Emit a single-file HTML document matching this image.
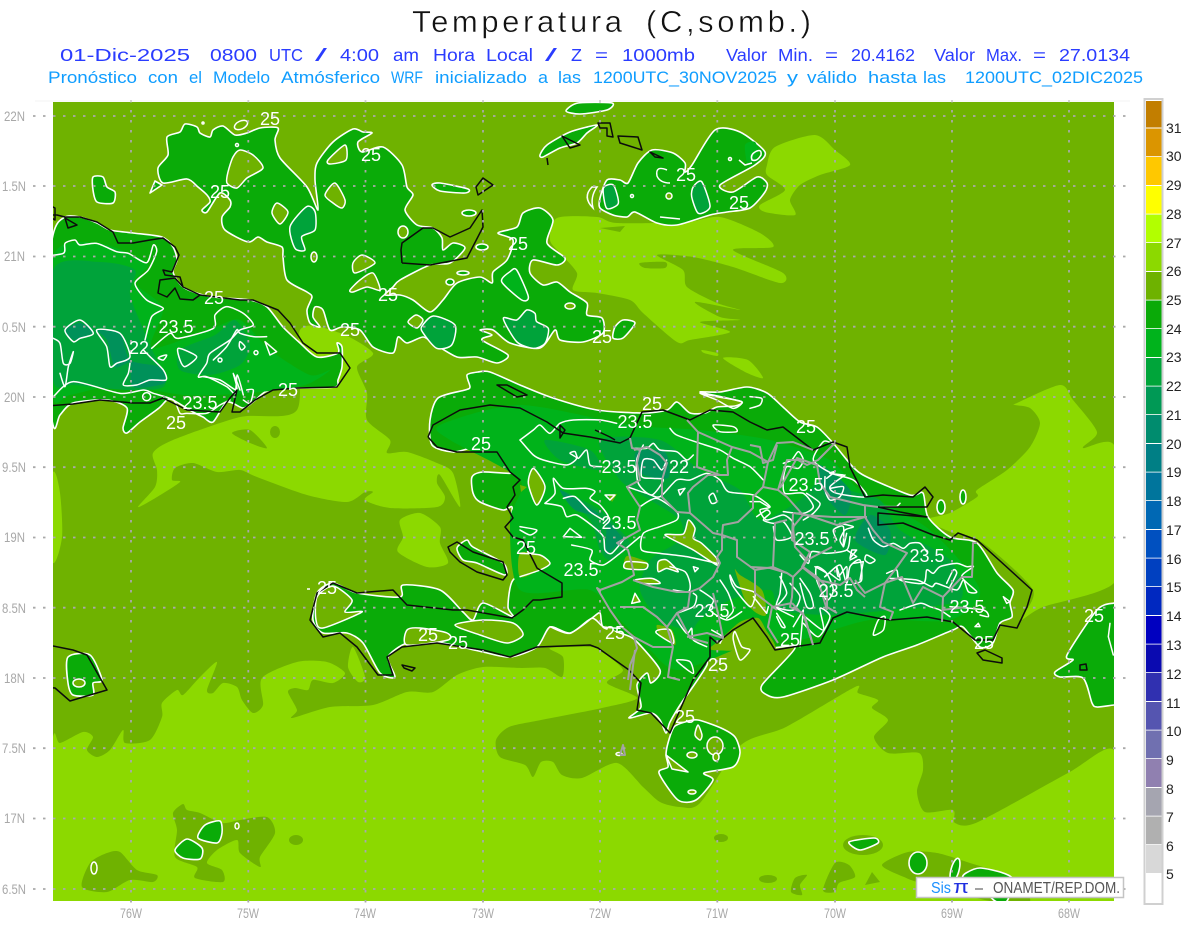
<!DOCTYPE html>
<html lang="es"><head><meta charset="utf-8"><title>Temperatura</title>
<style>
html,body{margin:0;padding:0;background:#fff;width:1200px;height:927px;overflow:hidden}
svg{display:block;font-family:"Liberation Sans",sans-serif}
.l polygon,.l path{fill:#8cd900;stroke:none}
.o polygon,.o ellipse,.o path{fill:#6fb200;stroke:none}
.g polygon,.g ellipse,.g path{fill:#0aab08;stroke:#fff;stroke-width:1.6;stroke-linejoin:round}
.h polygon,.h ellipse,.h circle,.h path{fill:#6fb200;stroke:#fff;stroke-width:1.5;stroke-linejoin:round}
.c polyline,.c polygon,.c path,.c circle{fill:none;stroke:#fff;stroke-width:4.5;stroke-linejoin:round;stroke-linecap:round}
.k polyline,.k polygon{fill:none;stroke:#0c0c0c;stroke-width:1.5;stroke-linejoin:round}
.b polyline{fill:none;stroke:#a2a2a2;stroke-width:2;stroke-linejoin:round}
.t text{fill:#fff;font-size:18px;text-anchor:middle}
.y text{fill:#a8a8a8;font-size:14px}
.x text{fill:#a8a8a8;font-size:14px}
.n text{fill:#222;font-size:14px}
.a text{font-size:17.500px;fill:#2a3cff}
.d text{font-size:17px;fill:#0f9dff}
</style></head><body>
<svg width="1200" height="927" viewBox="0 0 1200 927" xmlns="http://www.w3.org/2000/svg">
<rect width="1200" height="927" fill="#fff"/>
<g font-size="31" fill="#111" stroke="#fff" stroke-width=".45">
<text x="412" y="32" textLength="210" lengthAdjust="spacing">Temperatura</text>
<text x="646" y="32" textLength="165" lengthAdjust="spacing">(C,somb.)</text>
</g>
<g class="a">
<text x="60" y="61" textLength="130" lengthAdjust="spacingAndGlyphs">01-Dic-2025</text>
<text x="210" y="61" textLength="47" lengthAdjust="spacingAndGlyphs">0800</text>
<text x="269" y="61" textLength="34" lengthAdjust="spacingAndGlyphs">UTC</text>
<text x="315" y="61" textLength="12" lengthAdjust="spacingAndGlyphs">/</text>
<text x="340" y="61" textLength="39" lengthAdjust="spacingAndGlyphs">4:00</text>
<text x="393" y="61" textLength="26" lengthAdjust="spacingAndGlyphs">am</text>
<text x="433" y="61" textLength="42" lengthAdjust="spacingAndGlyphs">Hora</text>
<text x="486" y="61" textLength="47" lengthAdjust="spacingAndGlyphs">Local</text>
<text x="545" y="61" textLength="12" lengthAdjust="spacingAndGlyphs">/</text>
<text x="571" y="61" textLength="11" lengthAdjust="spacingAndGlyphs">Z</text>
<text x="595" y="61" textLength="13" lengthAdjust="spacingAndGlyphs">=</text>
<text x="622" y="61" textLength="73" lengthAdjust="spacingAndGlyphs">1000mb</text>
<text x="726" y="61" textLength="41" lengthAdjust="spacingAndGlyphs">Valor</text>
<text x="778" y="61" textLength="35" lengthAdjust="spacingAndGlyphs">Min.</text>
<text x="825" y="61" textLength="13" lengthAdjust="spacingAndGlyphs">=</text>
<text x="851" y="61" textLength="64" lengthAdjust="spacingAndGlyphs">20.4162</text>
<text x="934" y="61" textLength="41" lengthAdjust="spacingAndGlyphs">Valor</text>
<text x="986" y="61" textLength="36" lengthAdjust="spacingAndGlyphs">Max.</text>
<text x="1033" y="61" textLength="13" lengthAdjust="spacingAndGlyphs">=</text>
<text x="1059" y="61" textLength="71" lengthAdjust="spacingAndGlyphs">27.0134</text>
</g>
<g class="d">
<text x="48" y="83" textLength="89" lengthAdjust="spacingAndGlyphs">Pronóstico</text>
<text x="148" y="83" textLength="30" lengthAdjust="spacingAndGlyphs">con</text>
<text x="189" y="83" textLength="13" lengthAdjust="spacingAndGlyphs">el</text>
<text x="213" y="83" textLength="57" lengthAdjust="spacingAndGlyphs">Modelo</text>
<text x="281" y="83" textLength="99" lengthAdjust="spacingAndGlyphs">Atmósferico</text>
<text x="391" y="83" textLength="32" lengthAdjust="spacingAndGlyphs">WRF</text>
<text x="435" y="83" textLength="92" lengthAdjust="spacingAndGlyphs">inicializado</text>
<text x="538" y="83" textLength="10" lengthAdjust="spacingAndGlyphs">a</text>
<text x="558" y="83" textLength="23" lengthAdjust="spacingAndGlyphs">las</text>
<text x="593" y="83" textLength="184" lengthAdjust="spacingAndGlyphs">1200UTC_30NOV2025</text>
<text x="787" y="83" textLength="11" lengthAdjust="spacingAndGlyphs">y</text>
<text x="807" y="83" textLength="50" lengthAdjust="spacingAndGlyphs">válido</text>
<text x="868" y="83" textLength="49" lengthAdjust="spacingAndGlyphs">hasta</text>
<text x="923" y="83" textLength="23" lengthAdjust="spacingAndGlyphs">las</text>
<text x="965" y="83" textLength="178" lengthAdjust="spacingAndGlyphs">1200UTC_02DIC2025</text>
</g>

<rect x="53" y="102" width="1061" height="799" fill="#6fb200"/>
<svg x="53" y="102" width="1061" height="799" viewBox="53 102 1061 799" overflow="hidden">
<g class="l s">
<polygon points="53,737 60,743 83,732 93,737 87,750 97,757 110,750 123,730 125,743 150,740 162,717 162,703 177,690 183,695 200,677 217,662 207,690 213,693 223,683 237,687 242,700 253,713 263,705 262,678 297,662 327,662 345,673 333,683 313,680 308,690 295,688 288,692 297,710 292,718 330,707 373,705 407,692 433,692 457,675 483,667 521,668 545,668 562,677 563,657 550,648 590,647 600,650 623,670 607,683 637,698 602,708 541,720 509,727 496,740 500,757 525,765 533,777 541,762 553,762 562,775 582,778 617,763 643,787 660,802 680,807 700,803 741,745 786,727 855,687 858,693 878,700 872,708 888,720 874,737 888,753 919,753 923,770 917,792 925,812 953,810 955,823 978,822 1068,773 1114,750 1125,830 1114,915 590,915 53,915 40,830"/>
<polygon points="353,647 365,677 358,682 348,667"/>
<polygon points="1017,403 1060,385 1073,400 1097,432 1083,448 1114,445 1125,520 1114,583 1043,607 1020,620 1033,590 983,543 953,533 927,520 950,513 977,497 977,490 1007,470 1030,447 1040,423 1030,408 1015,405"/>
<polygon points="557,218 597,217 617,223 687,222 720,217 760,233 773,247 733,250 783,273 780,283 733,267 693,257 657,255 683,270 687,287 717,303 740,310 695,302 720,317 740,320 700,322 730,332 690,340 677,342 643,313 630,300 597,293 573,290 577,273 560,253 550,240"/>
<polygon points="767,165 775,147 815,135 835,150 850,165 820,175 800,185 790,200 795,215 765,212 760,205 785,190 767,175"/>
<polygon points="153,453 173,440 240,417 297,410 300,330 340,333 373,353 357,367 367,393 367,420 390,440 387,453 407,452 437,463 453,473 460,507 440,475 437,483 445,497 437,507 390,508 365,500 373,492 365,492 347,502 307,495 257,477 240,470 217,472 193,463 175,468 172,480 180,482 157,497 138,507 155,487 157,470"/>
<polygon points="400,520 420,513 440,527 440,543 448,563 427,567 398,552 403,537"/>
<polygon points="53,472 60,493 62,537 53,563 40,520"/>
<polygon points="723,358 748,360 763,378 745,372"/>
<polygon points="702,350 717,353 717,356 704,353"/>
</g>
<g class="o s">
<polygon points="183,804 173,813 177,830 175,857 197,867 195,878 223,882 222,870 207,863 217,850 237,840 240,853 260,867 260,857 275,833 267,817 240,820 222,823 200,813 187,810"/>
<polygon points="90,863 82,887 107,892 130,880 153,882 157,875 137,870 120,852 107,853"/>
<ellipse cx="296" cy="840" rx="7" ry="5"/>
<ellipse cx="721" cy="838" rx="7" ry="4"/>
<ellipse cx="768" cy="879" rx="9" ry="4"/>
<polygon points="791,892 795,878 807,875 800,885 802,895"/>
<polygon points="823,890 835,863 849,865 855,877 839,883 835,892"/>
<polygon points="865,885 872,872 880,882"/>
<polygon points="882,865 908,852 937,853 970,863 1010,877 1030,901 990,901 921,883 904,877"/>
<ellipse cx="863" cy="845" rx="20" ry="10"/>
<polygon points="232,433 250,430 267,448 250,443"/>
<ellipse cx="275" cy="432" rx="5" ry="6"/>
<polygon points="640,263 665,262 665,268 645,268"/>
<polygon points="600,228 625,226 620,232"/>
</g>
<g class="g s">
<polygon points="167,137 180,132 185,124 197,127 200,133 210,137 213,130 223,126 235,135 247,133 260,128 278,128 275,140 280,158 307,187 318,210 315,180 317,163 333,142 353,129 363,132 372,133 358,142 362,152 383,147 402,165 407,187 413,195 405,210 417,225 433,228 442,238 443,250 453,243 465,248 450,263 430,265 400,280 393,287 385,295 400,295 413,300 430,312 443,300 457,283 480,277 492,283 493,272 507,260 513,240 498,233 517,227 523,213 540,208 553,220 547,243 565,258 557,265 533,260 530,273 543,285 557,282 570,292 587,303 587,315 602,318 603,333 583,342 560,340 555,330 540,348 510,343 493,330 480,330 492,335 482,340 508,355 497,363 477,357 457,357 433,343 423,337 407,343 398,337 393,353 373,347 360,330 342,327 330,330 323,310 315,307 313,317 320,327 310,323 307,310 312,297 307,292 287,280 283,257 282,247 267,242 258,237 248,242 225,230 222,217 230,207 230,200 220,193 207,212 202,210 210,202 207,195 198,187 187,179 163,183 158,168 168,155"/>
<polygon points="93,177 103,177 107,187 115,192 113,203 97,202 93,190"/>
<polygon points="155,181 162,185 150,193"/>
<polygon points="53,235 65,217 80,217 97,223 110,230 133,233 162,237 173,247 177,260 173,272 183,287 203,295 223,298 250,300 267,307 283,327 300,343 317,357 338,353 337,343 342,347 342,367 338,380 335,387 297,388 280,387 265,392 253,402 243,408 227,402 213,422 203,417 193,412 173,400 167,400 159,408 140,422 127,433 123,428 127,408 107,400 73,403 60,415 53,425 40,330"/>
<polygon points="540,155 547,145 570,132 597,125 587,133 577,143 560,148 543,157"/>
<polygon points="566,111 578,103 612,103 607,110 580,114"/>
<polygon points="600,198 607,180 620,180 628,183 638,163 652,150 673,153 685,163 685,172 692,165 715,130 740,132 765,152 755,165 720,185 733,192 757,177 767,183 765,192 750,208 727,212 710,215 677,225 657,223 635,212 627,217 613,215 600,208"/>
<polygon points="432,185 440,183 468,189 465,193 440,191"/>
<polygon points="615,327 623,320 635,323 623,338 613,338"/>
<polygon points="467,375 478,372 490,372 520,385 553,398 597,410 643,413 667,410 677,402 690,413 705,413 717,407 735,406 742,402 722,397 700,392 720,392 747,387 767,393 783,407 800,422 817,427 833,443 853,467 867,477 910,495 923,493 928,517 950,537 977,543 997,573 1013,590 1010,603 1012,617 1000,623 993,643 980,647 963,627 953,630 917,645 883,657 833,680 783,697 767,695 762,685 795,648 770,648 711,648 707,665 692,688 682,702 670,722 666,733 660,720 651,713 629,718 641,707 637,685 647,673 651,683 660,670 635,640 620,633 603,627 600,613 592,618 570,633 550,627 537,647 510,657 483,652 437,642 407,643 388,657 395,677 380,673 363,643 347,633 323,633 313,620 317,593 333,583 357,593 400,597 403,585 440,590 463,612 473,620 483,603 513,617 508,607 513,580 537,570 530,555 512,525 512,507 503,510 480,502 473,493 472,477 483,472 512,473 507,462 495,452 473,448 453,452 432,445 430,420 438,398 465,390 470,387"/>
<polygon points="457,548 467,540 473,547 503,563 505,575 477,563 463,560"/>
<polygon points="698,720 721,728 735,737 740,753 733,767 704,773 713,780 696,800 678,800 659,773 668,767 666,755 668,743 674,727 685,722"/>
<polygon points="68,657 90,655 102,680 93,683 93,695 73,695 68,683"/>
<polygon points="220,821 222,833 217,843 198,838 205,825"/>
<polygon points="187,839 202,848 200,859 183,858 175,850"/>
<polygon points="1125,603 1114,603 1097,610 1067,655 1073,660 1055,672 1060,677 1083,678 1092,703 1097,707 1114,705 1125,705"/>
<ellipse cx="918" cy="863" rx="9" ry="11"/>
<ellipse cx="955" cy="870" rx="4" ry="12" transform="rotate(15 955 870)" />
<polygon points="966,873 980,868 1003,873 1013,880 1007,901 995,901 977,883 963,878"/>
<polygon points="849,842 874,838 878,843 860,850"/>
<ellipse cx="463" cy="273" rx="6" ry="2"/>
<ellipse cx="450" cy="282" rx="4" ry="3"/>
<ellipse cx="482" cy="247" rx="6" ry="3"/>
<ellipse cx="469" cy="213" rx="7" ry="3"/>
<ellipse cx="963" cy="497" rx="3" ry="7"/>
<ellipse cx="941" cy="507" rx="4" ry="7"/>
</g>
<!-- interior shades -->
<g fill="#00b31a" class="s">
<polygon points="440,425 520,405 630,425 700,430 770,440 830,460 860,490 930,530 980,590 950,620 870,620 800,640 760,640 680,670 650,650 620,620 590,590 520,590 510,520 520,480 450,440"/>
<polygon points="53,257 97,243 147,263 135,283 163,308 152,348 213,328 240,320 270,350 310,375 330,370 305,385 250,393 185,395 120,385 70,395 53,395"/>
<polygon points="510,272 517,270 528,297 522,300 502,282"/>
<polygon points="745,145 755,142 758,155 748,165"/>
</g>
<g fill="#00a33a" class="s">
<polygon points="53,270 100,262 135,270 130,295 150,345 165,385 130,390 75,385 53,380"/>
<polygon points="180,350 215,335 235,320 250,345 240,365 210,375 180,370"/>
<polygon points="600,440 660,440 700,470 740,490 760,520 800,500 830,470 850,490 880,500 900,530 950,560 960,600 890,610 830,615 780,610 770,590 730,600 700,620 690,630 660,620 640,590 650,560 680,540 680,520 650,500 620,480"/>
<polygon points="545,440 590,450 600,470 560,460"/>
<polygon points="560,490 600,510 620,530 630,545 610,560 600,550 590,520"/>
<polygon points="503,318 517,320 527,310 535,313 537,322 548,328 545,343 533,348 517,342"/>
<polygon points="422,327 433,316 455,325 452,345 437,348 423,333"/>
<polygon points="603,188 613,185 618,203 607,208"/>
<polygon points="693,187 702,182 710,207 698,213 692,197"/>
<polygon points="307,207 315,212 315,230 302,237 305,250 295,248 290,227"/>
</g>
<g fill="#00915a" class="s">
<polygon points="97,330 120,333 130,360 160,367 165,383 133,387 130,363 115,367 107,340"/>
<polygon points="65,330 80,323 93,332 75,340"/>
<polygon points="636,452 665,452 668,478 640,473"/>
<polygon points="607,520 625,540 605,555"/>
<polygon points="820,465 850,490 845,515 825,495"/>
<polygon points="870,515 890,530 885,555 855,540"/>
<polygon points="560,490 585,505 600,515 575,510"/>
</g>
<g class="h s">
<polygon points="240,150 253,155 263,168 247,178 237,188 227,183 228,172 233,157"/>
<polygon points="345,145 346,160 330,164 328,160"/>
<polygon points="335,183 345,200 342,208 333,203 325,195"/>
<polygon points="277,203 288,212 280,224 272,213"/>
<ellipse cx="314" cy="257" rx="3" ry="5"/>
<polygon points="362,255 375,263 355,273 353,263"/>
<polygon points="350,290 360,280 373,273 380,290 367,287 353,292"/>
<ellipse cx="403" cy="232" rx="5" ry="6"/>
<ellipse cx="241" cy="125" rx="7" ry="4" transform="rotate(-25 241 125)"/>
<ellipse cx="570" cy="306" rx="5" ry="3"/>
<polygon points="408,322 416,315 423,320 417,328"/>
<ellipse cx="79" cy="683" rx="6" ry="4"/>
<ellipse cx="94" cy="868" rx="3" ry="6"/>
<ellipse cx="237" cy="826" rx="2" ry="3"/>
<circle cx="669" cy="196" r="3"/>
<polygon points="407,630 420,628 447,633 448,640 407,645"/>
<polygon points="317,597 333,586 352,600 345,612 362,612 323,628 316,620"/>
<polygon points="455,625 483,620 513,623 523,635 507,643 480,635"/>
<polygon points="666,755 688,772 672,769"/>
<ellipse cx="715" cy="746" rx="8" ry="9"/>
<polygon points="698,725 702,735 700,740 695,735"/>
<ellipse cx="692" cy="755" rx="5" ry="3"/>
<ellipse cx="716" cy="757" rx="3" ry="4"/>
<ellipse cx="692" cy="792" rx="4" ry="2"/>
</g>
<!-- olive holes in Hispaniola -->
<g fill="#72b400" class="s">
<polygon points="665,535 683,534 688,520 695,529 693,538 702,543 717,558 717,565 693,550"/>
<polygon points="658,562 667,560 678,571 667,568 658,572"/>
<polygon points="627,556 647,562 645,568 625,568"/>
<polygon points="635,580 652,578 660,583 643,584"/>
<polygon points="635,593 640,602 633,604"/>
<polygon points="735,570 740,575 762,590 766,615 755,612 745,600"/>
<polygon points="605,625 620,635 612,640"/>
<polygon points="657,625 672,630 675,645 660,635"/>
<polygon points="608,495 617,494 612,502"/>
<polygon points="533,468 545,487 537,505 528,483"/>
<polygon points="520,553 540,555 550,563 540,570 520,577"/>
<polygon points="520,485 527,487 521,492"/>
<polygon points="720,640 740,622 758,618 766,630 775,645 770,650 712,650"/>
</g>
<!-- inner contours -->
<g class="c s" transform="translate(40,100) scale(.33333)">
<polyline points="0,470 70,460 75,430 105,420 120,435 170,430 230,455 265,460 320,488 340,435 350,455 325,510 285,550 320,600 370,625 335,650 315,720"/>
<polyline points="335,745 390,700 415,715 520,685 525,645 560,620 610,640 640,675 600,690 570,720 510,760 500,790 475,830 500,830 560,860 585,880 592,825 610,885"/>
<polyline points="40,715 60,730 70,790 90,790 100,755 85,800 75,860 60,820"/>
<polygon points="75,690 120,660 160,700 120,715 100,725"/>
<polygon points="170,690 240,700 270,770 230,790 210,800 200,740"/>
<polyline points="40,890 100,845 240,880 310,870 340,880 400,900 420,940 440,940 500,940 540,915 570,900"/>
<polygon points="360,770 380,765 370,780 355,775"/>
<polygon points="415,745 470,770 435,800 420,780"/>
<polyline points="270,790 265,820 250,855 290,855 330,840 378,840 370,810 330,770 310,750"/>
<polyline points="490,830 540,840 590,870 580,820 600,870"/>
<polygon points="600,725 615,740 605,750 598,740"/>
<polygon points="675,725 710,755 690,765"/>
<polyline points="620,870 640,870 630,910 610,900"/>
<polyline points="520,780 560,740 590,690 600,700 640,710 680,710"/>
<circle cx="648" cy="758" r="6"/>
<circle cx="540" cy="780" r="6"/>
<circle cx="320" cy="890" r="12"/>
<polygon points="800,320 825,335 825,390 785,410 795,450 765,445 750,380"/>
</g>
<g class="c s" transform="translate(400,100) scale(.33333)">
<polygon points="310,655 350,660 380,630 405,640 410,665 445,685 435,730 400,745 350,725"/>
<polygon points="330,515 350,510 385,590 365,600 305,545"/>
<polygon points="65,680 100,648 165,675 155,735 110,745 70,700"/>
<polygon points="610,265 640,255 655,310 620,325"/>
<polygon points="880,260 905,245 930,320 895,340 875,290"/>
</g>
<g class="c s" transform="translate(520,380) scale(.33333)">
<polyline points="0,180 40,150 60,135 90,160 120,130 160,120 240,120 290,130"/>
<polyline points="0,180 40,225 70,240 140,255 170,235 150,220 165,215 175,235 200,210 210,255 245,260"/>
<polyline points="340,205 380,205 400,190 420,210 470,215 500,240 520,225"/>
<polyline points="450,145 470,165 540,190 600,210 640,235 690,260 730,300"/>
<polyline points="75,370 105,340 100,295 130,325 200,325 225,335 210,355 240,375 265,410 250,430"/>
<polyline points="75,370 125,380 140,410 170,405 220,440 250,470 255,510 275,520 310,480"/>
<polyline points="130,355 165,350 210,395 250,420"/>
<polygon points="40,265 75,320 50,375 25,310"/>
<polygon points="255,345 285,345 270,360"/>
<polygon points="130,470 150,445 185,472"/>
<polyline points="0,440 50,450 30,465 0,450"/>
<polyline points="0,520 60,525 90,550 60,570 0,590"/>
<polyline points="155,495 215,510 210,540 250,555 300,520 360,470"/>
<polyline points="370,195 350,240 355,310 395,345 430,300 400,295 365,290 370,240 400,240 425,270 440,240"/>
<polyline points="320,320 380,340 420,350 470,300 510,300 560,280 600,300 625,335 700,345 750,380 720,390 740,420 790,405 820,430 815,480"/>
<polyline points="360,380 410,355 470,395 470,420 420,440 370,460 365,510 420,520 500,530 590,550"/>
<polygon points="435,465 490,462 505,420 525,445 520,475 545,490 590,535 590,555 520,510"/>
<polygon points="415,545 440,540 475,575 440,565 415,575"/>
<polygon points="520,560 535,565 525,575"/>
<polygon points="580,340 590,365 575,370 567,350"/>
<polygon points="475,330 495,325 480,345"/>
<polygon points="630,585 650,620 700,635 705,650 690,680 640,620"/>
<polygon points="580,135 640,140 650,155 600,155"/>
<polygon points="320,545 380,550 375,568 315,565"/>
<polygon points="345,600 395,595 420,610 370,610"/>
<polygon points="345,640 360,665 335,670"/>
<polyline points="90,740 150,760 215,715 250,740 300,745"/>
<polygon points="415,750 450,750 460,790 410,760"/>
<polyline points="470,700 520,680 530,650 520,640"/>
<polyline points="470,720 500,760 515,745 520,780 560,800"/>
<polyline points="575,750 610,770 600,790"/>
<polygon points="645,755 665,800 690,810 660,840 640,780"/>
<polygon points="470,840 510,845 520,880 490,860"/>
<polyline points="790,250 815,240 835,215 850,240 835,265 800,260 790,300 795,340 850,340 880,380 850,400 790,395"/>
<polyline points="935,190 910,185 880,240 935,280 1000,300 1040,350 950,340 930,320 975,285"/>
<polyline points="960,430 1000,440 975,450 960,480 970,500"/>
<polyline points="980,510 1010,530 990,540"/>
<polyline points="1000,550 1030,545 1020,600"/>
<polygon points="890,560 920,580 940,630 920,660 890,600"/>
<polyline points="780,590 800,640 770,680 780,690 820,710"/>
<polyline points="840,595 870,640 880,680 860,680 840,610"/>
<polyline points="930,580 960,600 950,560 955,590 980,560 980,600"/>
<polyline points="700,650 740,700 745,680"/>
<polygon points="540,40 590,50 665,65 640,85 590,60"/>
<polyline points="450,560 495,575 510,610 505,635 460,630"/>
<polyline points="540,630 580,660 570,690 620,720 665,695"/>
<polyline points="600,600 625,640 640,690 620,715"/>
</g>
<g class="c s" transform="translate(750,370) scale(.33333)">
<polyline points="20,440 50,420 60,430 40,450 70,460 100,455 125,500 80,510 70,470"/>
<polyline points="0,395 30,395 55,410"/>
<polyline points="150,555 175,580 185,545 230,550 290,540 300,500"/>
<polyline points="195,590 230,610 225,620 270,585 290,640 300,590 330,570 335,630 315,640"/>
<polygon points="305,540 320,540 300,565"/>
<polygon points="350,555 375,570 360,580 345,570"/>
<polyline points="355,475 370,510 400,530 430,520 460,535 480,520 510,520 530,545"/>
<polyline points="290,490 280,530 280,470 250,480 260,510"/>
<polyline points="280,315 240,310 255,305 230,325"/>
<polyline points="240,355 280,350 270,380 240,390 225,360 225,320"/>
<polyline points="170,370 210,400 190,430 160,450"/>
<polyline points="410,610 440,600 450,630 520,640 530,600 550,610 570,590 620,580 650,590 670,590 635,620 680,665 655,665 640,630 620,660 560,640 545,650 500,630 420,625"/>
<polyline points="590,640 610,600 620,610 600,650"/>
<polyline points="600,710 700,720 715,740 690,735"/>
<polyline points="450,720 510,700 540,710 570,720 600,740"/>
<polygon points="405,740 400,780 370,795 385,750"/>
<polygon points="685,760 690,770 675,770"/>
<polygon points="760,680 780,695 770,700"/>
<polyline points="0,80 35,85 30,105 0,115"/>
<polyline points="80,730 105,770 95,770 80,740"/>
<polyline points="130,770 160,720 150,830"/>
<polyline points="165,740 220,780 210,715 240,740 205,800 160,760"/>
<polyline points="95,610 90,670 80,710 130,720 150,680 120,640"/>
<polyline points="450,400 440,410 390,410"/>
<polyline points="1080,760 1075,800 1090,855"/>
</g>
<g fill="none" stroke="#fff" stroke-width="1.5">
<path d="M592,187Q582,197 593,208Q590,197 597,187Z"/>
<path d="M667,170Q655,165 657,176Q660,183 670,183"/>
<circle cx="203" cy="123" r="1"/><circle cx="237" cy="145" r="1.5"/><circle cx="730" cy="159" r="1.5"/><circle cx="632" cy="196" r="1.5"/>
<path d="M739,160L745,165L752,163"/><path d="M680,219L660,217"/>
<path d="M755,152Q762,148 761,155Q757,162 752,160Q750,155 755,152Z"/>
<ellipse cx="619" cy="754" rx="3" ry="1.500"/>
<path d="M307,589L310,589"/>
</g>
<!-- coast -->
<g class="k">
<polyline points="33,203 45,203 55,208 55,220 47,215 57,215 65,217 80,217 97,222 113,232 118,243 133,243 150,240 163,238 175,247 179,255 172,272 163,270 165,275 180,277 183,287 200,295 193,300 180,299 175,288 167,297 158,293 160,280 175,278 183,287"/>
<polyline points="200,295 240,300 253,300 278,310 290,323 303,343 317,353 340,353 350,368 337,387 297,388 273,390 255,400 240,412 232,412 237,390 230,398 220,412 187,410 163,398 150,403 133,403 100,400 73,404 33,407"/>
<polygon points="65,218 77,225 68,228"/>
<polyline points="402,263 401,250 402,243 423,228 433,228 450,237 470,228 482,210 483,227 467,258 430,265 402,263"/>
<polygon points="476,187 483,178 493,185 478,195"/>
<polygon points="562,136 580,145 570,148"/>
<polyline points="547,158 548,165"/>
<polygon points="598,123 610,123 613,137 607,136 607,128 600,128"/>
<polygon points="618,136 638,137 642,150 620,143"/>
<polygon points="650,152 663,158 655,157"/>
<polygon points="497,385 507,385 527,395 517,397"/>
<polyline points="428,437 433,425 460,410 490,405 520,408 547,422 563,433 590,437 620,443 630,438 642,412 663,410 690,420 710,410 733,412 750,422 767,430 783,427 813,450 833,442 847,447 850,467 865,497 883,495 913,497 925,487 933,497 927,507 878,507 900,512 927,517 878,513 878,525 903,523 933,535 950,540 958,533 977,540 1032,590 1027,607 1017,628 1000,625 993,640 975,640 953,622 927,617 890,620 877,618 847,612 833,618 820,643 793,647 775,650 767,637 753,618 733,630 717,643 710,637 710,657 693,680 670,733 651,713 637,710 641,683 629,670 598,648 590,645 537,647 510,657 483,650 437,643 402,647 387,657 393,675 378,675 357,647 340,633 323,637 310,620 317,593 333,583 357,593 393,590 407,605 453,610 467,610 512,618 523,610 533,600 540,600 562,597 562,583 540,570 537,568 523,540 513,537 505,527 513,518 507,507 515,495 513,487 520,480 510,472 497,452 457,452 437,447 428,437"/>
<polygon points="448,547 457,542 473,552 503,562 507,575 503,580 477,572 460,562 450,552"/>
<polygon points="402,665 415,668 412,671 404,668"/>
<polygon points="977,653 985,650 1002,658 1002,663 983,660"/>
<polyline points="33,632 40,640 53,646 73,650 87,655 107,690 90,695 70,701 55,688 33,686"/>
<polygon points="1080,665 1086,664 1087,670 1080,670"/>
<polygon points="560,425 565,430 560,438"/>
<polyline points="595,430 610,437 615,440"/>
</g>
<!-- borders -->
<g class="b">
<polyline points="630,438 632,448 640,450 637,463 640,480 627,487 632,495 640,507 637,520 640,530 617,543 628,550 632,565 634,575 622,582 600,590 597,588 610,610 622,627 634,637 637,648 630,665 628,680"/>
<polyline points="634,450 647,447 660,455 667,463 662,480 662,497 677,512 690,513 688,493 693,487 708,475 728,475 727,460 732,447 698,432 687,420"/>
<polyline points="698,432 697,467 720,475"/>
<polyline points="732,447 750,452 768,462 777,443 793,442 813,450"/>
<polyline points="768,462 763,487 753,497 753,508 738,522 723,525 722,535 713,533 690,513"/>
<polyline points="763,487 778,490 787,460 798,460 807,465 818,460 835,443"/>
<polyline points="778,490 787,497 803,515 833,517 867,517"/>
<polyline points="803,515 793,527 795,547 807,560 832,547"/>
<polyline points="722,535 722,550 717,557 720,563 713,577 700,588 690,592 677,592 653,587 633,580"/>
<polyline points="722,535 737,540 737,557 755,570 755,593 777,610"/>
<polyline points="755,570 773,567 775,523 787,520"/>
<polyline points="773,567 787,573 793,577 803,567 807,560"/>
<polyline points="793,577 792,597 790,607 803,613 813,645"/>
<polyline points="803,567 817,577 827,587 827,607 837,613"/>
<polyline points="690,592 688,607 677,613 667,627 657,617 643,607 620,607"/>
<polyline points="667,627 673,647 670,663 668,677 680,680"/>
<polyline points="634,637 653,647 673,647"/>
<polyline points="677,613 690,638 708,643"/>
<polyline points="687,637 707,633 723,638 718,613 713,593"/>
<polyline points="750,445 760,447 763,463 773,460 777,445"/>
<polyline points="780,488 797,458 817,465 820,483 830,497 863,505 878,507"/>
<polyline points="793,513 807,515 837,525 865,517 865,505"/>
<polyline points="793,513 792,540 810,552 802,567 818,580 827,610"/>
<polyline points="865,517 873,530 883,542 907,553 897,567 885,583 880,607 893,612 890,620"/>
<polyline points="885,583 865,593 855,580"/>
<polyline points="885,583 902,577 913,603 923,587 943,597 942,622"/>
<polyline points="943,597 962,577 972,577 973,543 977,543"/>
<polyline points="942,610 967,607"/>
<polyline points="750,567 770,568 787,573"/>
<polyline points="792,603 772,607 768,627 778,643"/>
<polyline points="792,603 805,617 813,645"/>
<polyline points="818,580 840,585 850,578 857,590 865,597"/>
<polyline points="635,650 630,690"/>
<polyline points="620,755 623,745 625,755 620,755"/>
</g>
</svg>

<!-- grid -->
<g stroke="#a9a9a9" stroke-width="1.800" stroke-dasharray="2.500 7.500" fill="none">
<path d="M33 116H1130M33 186H1130M33 256.500H1130M33 326.700H1130M33 397H1130M33 467.200H1130M33 537.500H1130M33 607.700H1130M33 678H1130M33 748.200H1130M33 818.500H1130M33 889H1130"/>
<path d="M131 100V905M248.300 100V905M365.500 100V905M483 100V905M600 100V905M717.300 100V905M835 100V905M952 100V905M1069 100V905"/>
</g>
<path d="M35 101H1130" stroke="#f3f3f3" fill="none"/>

<g class="t">
<text x="270" y="125">25</text><text x="371" y="161">25</text><text x="220" y="198">25</text><text x="686" y="181">25</text><text x="739" y="209">25</text><text x="518" y="250">25</text><text x="214" y="304">25</text><text x="388" y="301">25</text><text x="350" y="336">25</text><text x="602" y="343">25</text><text x="288" y="396">25</text><text x="176" y="429">25</text><text x="652" y="410">25</text><text x="806" y="433">25</text><text x="481" y="450">25</text><text x="526" y="554">25</text><text x="327" y="594">25</text><text x="615" y="639">25</text><text x="428" y="641">25</text><text x="458" y="649">25</text><text x="718" y="671">25</text><text x="790" y="646">25</text><text x="984" y="649">25</text><text x="1094" y="622">25</text><text x="685" y="723">25</text>
<text x="176" y="333">23.5</text><text x="200" y="409">23.5</text><text x="635" y="428">23.5</text><text x="619" y="473">23.5</text><text x="806" y="491">23.5</text><text x="619" y="529">23.5</text><text x="581" y="576">23.5</text><text x="812" y="545">23.5</text><text x="927" y="562">23.5</text><text x="836" y="597">23.5</text><text x="967" y="613">23.5</text><text x="712" y="617">23.5</text>
<text x="139" y="354">22</text><text x="679" y="473">22</text>
</g>

<g class="y">
<text x="4" y="121" textLength="21" lengthAdjust="spacingAndGlyphs">22N</text>
<text x="2" y="191" textLength="24" lengthAdjust="spacingAndGlyphs">1.5N</text>
<text x="4" y="261" textLength="21" lengthAdjust="spacingAndGlyphs">21N</text>
<text x="2" y="332" textLength="24" lengthAdjust="spacingAndGlyphs">0.5N</text>
<text x="4" y="402" textLength="21" lengthAdjust="spacingAndGlyphs">20N</text>
<text x="2" y="472" textLength="24" lengthAdjust="spacingAndGlyphs">9.5N</text>
<text x="4" y="542" textLength="21" lengthAdjust="spacingAndGlyphs">19N</text>
<text x="2" y="613" textLength="24" lengthAdjust="spacingAndGlyphs">8.5N</text>
<text x="4" y="683" textLength="21" lengthAdjust="spacingAndGlyphs">18N</text>
<text x="2" y="753" textLength="24" lengthAdjust="spacingAndGlyphs">7.5N</text>
<text x="4" y="823" textLength="21" lengthAdjust="spacingAndGlyphs">17N</text>
<text x="2" y="894" textLength="24" lengthAdjust="spacingAndGlyphs">6.5N</text>
</g>
<g class="x">
<text x="120" y="918" textLength="22" lengthAdjust="spacingAndGlyphs">76W</text>
<text x="237" y="918" textLength="22" lengthAdjust="spacingAndGlyphs">75W</text>
<text x="354" y="918" textLength="22" lengthAdjust="spacingAndGlyphs">74W</text>
<text x="472" y="918" textLength="22" lengthAdjust="spacingAndGlyphs">73W</text>
<text x="589" y="918" textLength="22" lengthAdjust="spacingAndGlyphs">72W</text>
<text x="706" y="918" textLength="22" lengthAdjust="spacingAndGlyphs">71W</text>
<text x="824" y="918" textLength="22" lengthAdjust="spacingAndGlyphs">70W</text>
<text x="941" y="918" textLength="22" lengthAdjust="spacingAndGlyphs">69W</text>
<text x="1058" y="918" textLength="22" lengthAdjust="spacingAndGlyphs">68W</text>
</g>

<rect x="916.500" y="877.500" width="207" height="20" fill="#fff" stroke="#c4c4c4" stroke-width="1.500"/>
<text x="931" y="893" font-size="16" fill="#1a90ff" textLength="20" lengthAdjust="spacingAndGlyphs">Sis</text>
<text x="953" y="893" font-size="18" fill="#2030e0" textLength="16" lengthAdjust="spacingAndGlyphs">π</text>
<text x="975" y="893" font-size="15" fill="#444" textLength="8" lengthAdjust="spacingAndGlyphs">—</text>
<text x="993" y="893" font-size="16" fill="#555" textLength="127" lengthAdjust="spacingAndGlyphs">ONAMET/REP.DOM.</text>

<!-- colorbar -->
<rect x="1144.500" y="99" width="18" height="805" fill="#fff" stroke="#d0d0d0" stroke-width="2"/>
<g>
<rect x="1146" y="101" width="15.500" height="26.500" fill="#c27e00"/>
<rect x="1146" y="128.500" width="15.500" height="27.700" fill="#db9500"/>
<rect x="1146" y="157" width="15.500" height="28" fill="#ffc800"/>
<rect x="1146" y="186" width="15.500" height="27.700" fill="#ffff00"/>
<rect x="1146" y="214.500" width="15.500" height="27.700" fill="#b2ff00"/>
<rect x="1146" y="243" width="15.500" height="28" fill="#8cd900"/>
<rect x="1146" y="272" width="15.500" height="27.700" fill="#6eb200"/>
<rect x="1146" y="300.500" width="15.500" height="27.700" fill="#0aaa08"/>
<rect x="1146" y="329" width="15.500" height="28" fill="#00b31c"/>
<rect x="1146" y="358" width="15.500" height="27.700" fill="#00a53a"/>
<rect x="1146" y="386.500" width="15.500" height="27.700" fill="#009955"/>
<rect x="1146" y="415" width="15.500" height="28" fill="#008c6e"/>
<rect x="1146" y="444" width="15.500" height="27.700" fill="#007f85"/>
<rect x="1146" y="472.500" width="15.500" height="27.700" fill="#00759c"/>
<rect x="1146" y="501" width="15.500" height="28" fill="#0068b4"/>
<rect x="1146" y="530" width="15.500" height="27.700" fill="#0050c0"/>
<rect x="1146" y="558.500" width="15.500" height="27.700" fill="#0040c0"/>
<rect x="1146" y="587" width="15.500" height="28" fill="#0028c0"/>
<rect x="1146" y="616" width="15.500" height="27.700" fill="#0000c0"/>
<rect x="1146" y="644.500" width="15.500" height="27.700" fill="#0a0ab0"/>
<rect x="1146" y="673" width="15.500" height="28" fill="#3030b0"/>
<rect x="1146" y="702" width="15.500" height="27.700" fill="#5555b0"/>
<rect x="1146" y="730.500" width="15.500" height="27.700" fill="#7070b0"/>
<rect x="1146" y="759" width="15.500" height="28" fill="#9080b0"/>
<rect x="1146" y="788" width="15.500" height="27.700" fill="#a5a5b0"/>
<rect x="1146" y="816.500" width="15.500" height="27.700" fill="#b0b0b0"/>
<rect x="1146" y="845" width="15.500" height="28" fill="#d8d8d8"/>
</g>
<g class="n">
<text x="1166" y="133">31</text><text x="1166" y="161">30</text><text x="1166" y="190">29</text><text x="1166" y="219">28</text><text x="1166" y="248">27</text><text x="1166" y="276">26</text><text x="1166" y="305">25</text><text x="1166" y="334">24</text><text x="1166" y="362">23</text><text x="1166" y="391">22</text><text x="1166" y="420">21</text><text x="1166" y="449">20</text><text x="1166" y="477">19</text><text x="1166" y="506">18</text><text x="1166" y="535">17</text><text x="1166" y="564">16</text><text x="1166" y="592">15</text><text x="1166" y="621">14</text><text x="1166" y="650">13</text><text x="1166" y="679">12</text><text x="1166" y="708">11</text><text x="1166" y="736">10</text><text x="1166" y="765">9</text><text x="1166" y="794">8</text><text x="1166" y="822">7</text><text x="1166" y="851">6</text><text x="1166" y="879">5</text>
</g>
</svg>
<script>
(function(){
var NS="http://www.w3.org/2000/svg";
document.querySelectorAll(".s polygon,.s polyline").forEach(function(e){
var n=e.getAttribute("points").trim().split(/\s+/).map(function(p){return p.split(",").map(Number)});
if(n.length<4)return;
var closed=e.tagName==="polygon",L=n.length,f=.13;
function P(i){return closed?n[(i+L)%L]:n[Math.max(0,Math.min(L-1,i))]}
var d="M"+n[0][0]+" "+n[0][1],end=closed?L:L-1;
for(var i=0;i<end;i++){var a=P(i-1),b=P(i),c=P(i+1),g=P(i+2);
d+="C"+(b[0]+(c[0]-a[0])*f).toFixed(1)+" "+(b[1]+(c[1]-a[1])*f).toFixed(1)+" "+(c[0]-(g[0]-b[0])*f).toFixed(1)+" "+(c[1]-(g[1]-b[1])*f).toFixed(1)+" "+c[0]+" "+c[1];}
if(closed)d+="Z";
var p=document.createElementNS(NS,"path");p.setAttribute("d",d);e.parentNode.replaceChild(p,e);
});
})();
</script>
</body></html>
